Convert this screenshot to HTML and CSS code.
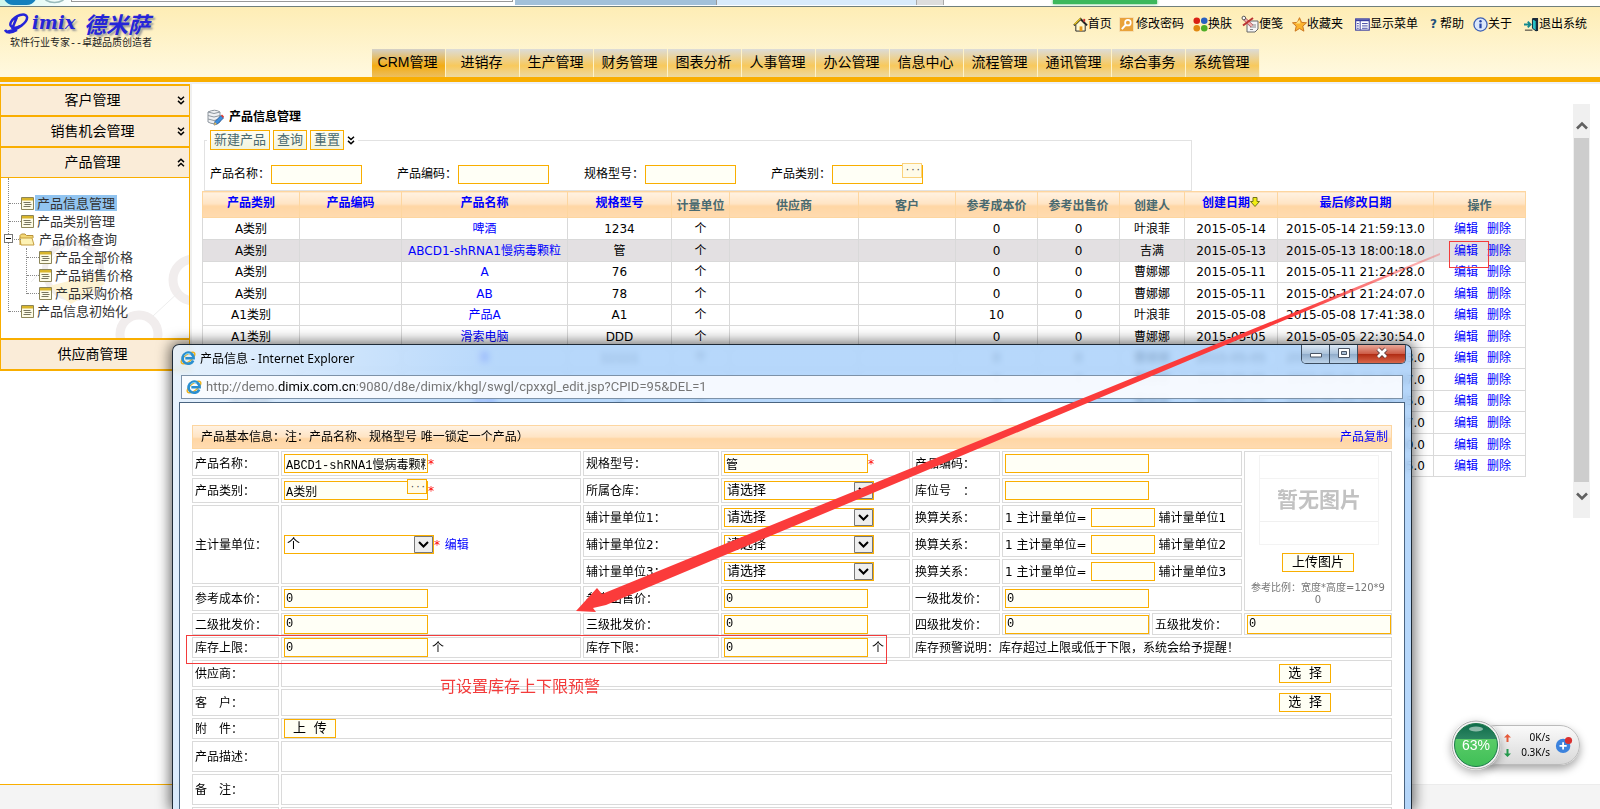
FILE: index.html
```html
<!DOCTYPE html>
<html lang="zh-CN">
<head>
<meta charset="utf-8">
<title>产品信息管理</title>
<link rel="stylesheet" href="styles.css">
</head>
<body>
<svg class="defs" aria-hidden="true">
  <defs>
    <symbol id="dbl" viewBox="0 0 8 9"><path d="M1 .7 4 3.5 7 .7M1 4.9 4 7.7 7 4.9" fill="none" stroke="#000" stroke-width="1.5"/></symbol>
    <symbol id="doc" viewBox="0 0 13 13"><path d="M.5 .5h12v12H.5z" fill="#fdfbe6" stroke="#8c8558"/><path d="M1 1h11v2.5H1z" fill="#d8b52c"/><path d="M2.500 5.500h7M3.500 7.500h7M2.500 9.500h7" stroke="#77755f"/></symbol>
    <symbol id="ie" viewBox="0 0 18 18"><ellipse cx="9" cy="9" rx="9.200" ry="4" transform="rotate(-38 9 9)" fill="none" stroke="#eeb21c" stroke-width="1.600"/><path d="M14.800 11.700A6.200 6.200 0 1 1 15.300 9.300H6" fill="none" stroke="#2a8fd0" stroke-width="3"/><path d="M5 6.500a5 5 0 0 1 7-1.800" stroke="#8fdcf8" stroke-width="1" fill="none"/></symbol>
    <linearGradient id="orb" x1="0" y1="0" x2="0" y2="1"><stop offset="0" stop-color="#0f6b4a"/><stop offset=".36" stop-color="#2c8662"/><stop offset=".37" stop-color="#59cc67"/><stop offset="1" stop-color="#3fbf57"/></linearGradient>
    <linearGradient id="trail" gradientUnits="userSpaceOnUse" x1="1440" y1="254" x2="1300" y2="312"><stop offset="0" stop-color="#fb3b3b" stop-opacity=".3"/><stop offset="1" stop-color="#fb3b3b"/></linearGradient>
  </defs>
</svg>

<div class="chrome-strip" aria-hidden="true">
  <svg class="chrome-back" viewBox="0 0 70 6"><path d="M4 0h31q-3 5-9 5H13Q7 5 4 0z" fill="#1480bd"/><path d="M45 0q9 5 18 0" fill="none" stroke="#9bb" stroke-width="1.500"/></svg>
  <span class="chrome-address"></span><span class="chrome-tab-a"></span><span class="chrome-tab-b"></span><span class="chrome-tab-c"></span><span class="chrome-green"></span>
</div>

<header class="header">
  <div class="brand">
    <div class="brand-name"><svg viewBox="0 0 28 24" class="brand-mark"><path d="M2 21C14 19 24 11 23 6 22 1 11 4 7 11c-3 6 5 7 9 4M13 6 8 18M1 19q3 5 12 0" fill="none" stroke="#2525d8" stroke-width="2.500"/></svg><b>imix</b><strong>德米萨</strong></div>
    <div class="brand-slogan">软件行业专家--卓越品质创造者</div>
  </div>
  <div class="header-side">
    <nav class="tools">
      <a href="#" class="t1"><svg viewBox="0 0 16 16"><path d="M3 8v7h10V8L8 3z" fill="#fff8cf" stroke="#222"/><path d="M1 9 8 2l7 7" fill="none" stroke="#222" stroke-width="2"/><path d="M1.500 8 8 1.500" stroke="#e8c51b" stroke-width="1.500"/><path d="M11 2h2v3h-2z" fill="#c33"/><path d="M7 10h3v5H7z" fill="#e89a1b"/></svg>首页</a>
      <a href="#" class="t2"><svg viewBox="0 0 16 16"><rect x=".5" y=".5" width="15" height="15" fill="#e9a23b" stroke="#f7dfb0"/><circle cx="9.500" cy="6" r="3" fill="none" stroke="#fff" stroke-width="1.800"/><path d="M7.500 8 3 13" stroke="#fff" stroke-width="2"/></svg>修改密码</a>
      <a href="#" class="t3"><svg viewBox="0 0 16 16"><circle cx="4" cy="4" r="3.500" fill="#d92114"/><circle cx="12" cy="4" r="3.500" fill="#2760c0"/><circle cx="4" cy="12" r="3.500" fill="#e08a12"/><circle cx="12" cy="12" r="3.500" fill="#4fae26"/></svg>换肤</a>
      <a href="#" class="t4"><svg class="wide" viewBox="0 0 18 18"><path d="M6 6h11v8l-3 3H6z" fill="#f5f5f5" stroke="#666"/><path d="M9 10h6M9 12h6M9 14.500h3" stroke="#888"/><path d="M3 3.500 11 11" stroke="#a55" stroke-width="3.500"/><path d="M3 3.500 11 11" stroke="#f3b4b4" stroke-width="2"/><path d="M2 10.500 12 3" stroke="#b33" stroke-width="2"/><circle cx="2.800" cy="3" r="1.800" fill="#fff" stroke="#555"/></svg>便笺</a>
      <a href="#" class="t5"><svg viewBox="0 0 16 16"><path d="m8 .7 2.200 5 5.300.500-4 3.500 1.200 5.400L8 12.300l-4.700 2.800 1.200-5.400-4-3.500 5.300-.5z" fill="#fbb32d" stroke="#c9731e"/><path d="m8 3 1 4-5 0z" fill="#ffe68a"/></svg>收藏夹</a>
      <a href="#" class="t6"><svg viewBox="0 0 16 16"><rect x=".7" y="2" width="14.500" height="12" fill="#fff" stroke="#3a3fa0" stroke-width="1.200"/><path d="M1 3.500h14" stroke="#3a3fa0" stroke-width="2"/><path d="M5.500 4v10M2 7h2M2 9.500h2M2 12h2M7.500 7h6M7.500 9.500h6M7.500 12h6" stroke="#3a3fa0"/></svg>显示菜单</a>
      <a href="#" class="t7"><b>?</b>帮助</a>
      <a href="#" class="t8"><svg viewBox="0 0 16 16"><circle cx="8" cy="8" r="7" fill="#dbe7fb" stroke="#3c5fb4" stroke-width="1.400"/><path d="M8 7v5" stroke="#2443a5" stroke-width="2.400"/><circle cx="8" cy="4.500" r="1.300" fill="#2443a5"/></svg>关于</a>
      <a href="#" class="t9"><svg viewBox="0 0 16 16"><path d="M9 1h6v14h-3" fill="#1b2a3a"/><path d="M9 2l4 2v11l-4-3z" fill="#27c3c9" stroke="#123"/><path d="M0 8h7M4 5l3 3-3 3" stroke="#12898f" stroke-width="2" fill="none"/><path d="M1 14h8" stroke="#222"/></svg>退出系统</a>
    </nav>
  </div>
  <nav class="tabs">
    <a href="#" class="on">CRM管理</a><a href="#">进销存</a><a href="#">生产管理</a><a href="#">财务管理</a><a href="#">图表分析</a><a href="#">人事管理</a><a href="#">办公管理</a><a href="#">信息中心</a><a href="#">流程管理</a><a href="#">通讯管理</a><a href="#">综合事务</a><a href="#">系统管理</a>
  </nav>
</header>

<div class="workspace">
  <aside class="sidebar">
    <button type="button" class="side-head"><span>客户管理</span><svg><use href="#dbl"/></svg></button>
    <button type="button" class="side-head"><span>销售机会管理</span><svg><use href="#dbl"/></svg></button>
    <button type="button" class="side-head"><span>产品管理</span><svg class="flip"><use href="#dbl"/></svg></button>
    <div class="side-panel">
      <svg class="watermark" viewBox="0 0 190 160" aria-hidden="true"><g fill="none" stroke="#f1eded" stroke-width="9"><circle cx="138" cy="156" r="19"/><circle cx="193" cy="102" r="21"/><circle cx="72" cy="92" r="28" stroke-width="6"/></g><path d="M152 138l28-26M30 104l34-36" stroke="#eee"/><path d="M48 108l48-12 8 10-34 20z" fill="#fdf3d3"/></svg>
      <ul class="tree">
        <li><a href="#" class="sel"><svg><use href="#doc"/></svg><span>产品信息管理</span></a></li>
        <li><a href="#"><svg><use href="#doc"/></svg><span>产品类别管理</span></a></li>
        <li class="branch"><a href="#"><i class="minus"></i><svg class="folder" viewBox="0 0 16 13"><path d="M1 12V2.500L2.500 1H6l1.500 1.500H14V5" fill="#f3d774" stroke="#b8923a"/><path d="M.8 5H13l2 7H2z" fill="#fdf2b4" stroke="#c49d3f"/></svg><span>产品价格查询</span></a>
          <ul>
            <li><a href="#"><svg><use href="#doc"/></svg><span>产品全部价格</span></a></li>
            <li><a href="#"><svg><use href="#doc"/></svg><span>产品销售价格</span></a></li>
            <li><a href="#"><svg><use href="#doc"/></svg><span>产品采购价格</span></a></li>
          </ul>
        </li>
        <li><a href="#"><svg><use href="#doc"/></svg><span>产品信息初始化</span></a></li>
      </ul>
    </div>
    <button type="button" class="side-head last"><span>供应商管理</span></button>
  </aside>

  <main class="main">
    <section class="content">
      <h1><svg viewBox="0 0 17 17"><path d="M1 3q7-3.500 12 0v10q-6 3.500-12 0z" fill="#eef0f3" stroke="#8f979f"/><path d="M1 3q6 3 12 0M1 6.500q6 3 12 0M1 10q6 3 12 0" fill="none" stroke="#8f979f"/><path d="M7 16l1-3.500 6-6 2.500 2.500-6 6z" fill="#3d8fe0" stroke="#234f8a" stroke-width=".8"/><path d="M14 6.500l1-1 2 2-1 1.500z" fill="#e23a2e"/><path d="M7 16l.8-3 2.200 2.200z" fill="#f3c057"/></svg>产品信息管理</h1>
      <form class="filter">
        <div class="filter-actions">
          <button type="button">新建产品</button><button type="button">查询</button><button type="button">重置</button><svg><use href="#dbl"/></svg>
        </div>
        <div class="filter-fields">
          <label>产品名称：<input type="text"></label>
          <label>产品编码：<input type="text"></label>
          <label>规格型号：<input type="text"></label>
          <label>产品类别：<span class="picker"><input type="text"><button type="button" aria-label="选择类别">···</button></span></label>
        </div>
      </form>
      <table class="grid">
        <colgroup><col class="g1"><col class="g2"><col class="g3"><col class="g4"><col class="g5"><col class="g6"><col class="g7"><col class="g8"><col class="g9"><col class="g10"><col class="g11"><col class="g12"><col class="g13"></colgroup>
        <thead><tr><th><a href="#">产品类别</a></th><th><a href="#">产品编码</a></th><th><a href="#">产品名称</a></th><th><a href="#">规格型号</a></th><th>计量单位</th><th>供应商</th><th>客户</th><th>参考成本价</th><th>参考出售价</th><th>创建人</th><th><a href="#">创建日期<svg viewBox="0 0 10 10"><path d="M3 .5h4v4h2.500L5 9.500.5 4.500H3z" fill="#f2ee12" stroke="#74741a"/></svg></a></th><th><a href="#">最后修改日期</a></th><th>操作</th></tr></thead>
        <tbody>
          <tr><td>A类别</td><td></td><td><a href="#">啤酒</a></td><td>1234</td><td>个</td><td></td><td></td><td>0</td><td>0</td><td>叶浪菲</td><td>2015-05-14</td><td>2015-05-14 21:59:13.0</td><td class="ops"><a href="#">编辑</a><a href="#">删除</a></td></tr>
          <tr class="hot"><td>A类别</td><td></td><td><a href="#">ABCD1-shRNA1慢病毒颗粒</a></td><td>管</td><td>个</td><td></td><td></td><td>0</td><td>0</td><td>吉满</td><td>2015-05-13</td><td>2015-05-13 18:00:18.0</td><td class="ops"><a href="#">编辑</a><a href="#">删除</a></td></tr>
          <tr class="low"><td>A类别</td><td></td><td><a href="#">A</a></td><td>76</td><td>个</td><td></td><td></td><td>0</td><td>0</td><td>曹娜娜</td><td>2015-05-11</td><td>2015-05-11 21:24:28.0</td><td class="ops"><a href="#">编辑</a><a href="#">删除</a></td></tr>
          <tr><td>A类别</td><td></td><td><a href="#">AB</a></td><td>78</td><td>个</td><td></td><td></td><td>0</td><td>0</td><td>曹娜娜</td><td>2015-05-11</td><td>2015-05-11 21:24:07.0</td><td class="ops"><a href="#">编辑</a><a href="#">删除</a></td></tr>
          <tr class="low"><td>A1类别</td><td></td><td><a href="#">产品A</a></td><td>A1</td><td>个</td><td></td><td></td><td>10</td><td>0</td><td>叶浪菲</td><td>2015-05-08</td><td>2015-05-08 17:41:38.0</td><td class="ops"><a href="#">编辑</a><a href="#">删除</a></td></tr>
          <tr><td>A1类别</td><td></td><td><a href="#">滑索电脑</a></td><td>DDD</td><td>个</td><td></td><td></td><td>0</td><td>0</td><td>曹娜娜</td><td>2015-05-05</td><td>2015-05-05 22:30:54.0</td><td class="ops"><a href="#">编辑</a><a href="#">删除</a></td></tr>
          <tr class="low"><td></td><td></td><td><a href="#">茶</a></td><td>11111</td><td>个</td><td></td><td></td><td>0</td><td>0</td><td>曹娜娜</td><td>2015-05-05</td><td>2015-05-05 22:28:13.0</td><td class="ops"><a href="#">编辑</a><a href="#">删除</a></td></tr>
          <tr><td></td><td></td><td></td><td></td><td></td><td></td><td></td><td>0</td><td>0</td><td>曹娜娜</td><td>2015-05-05</td><td>2015-05-05 22:25:07.0</td><td class="ops"><a href="#">编辑</a><a href="#">删除</a></td></tr>
          <tr class="low"><td>A1类别</td><td></td><td><a href="#">电脑</a></td><td>1</td><td>个</td><td></td><td></td><td>0</td><td>0</td><td>曹娜娜</td><td>2015-05-05</td><td>2015-05-05 22:20:15.0</td><td class="ops"><a href="#">编辑</a><a href="#">删除</a></td></tr>
          <tr><td></td><td></td><td></td><td></td><td></td><td></td><td></td><td></td><td></td><td></td><td></td><td>2015-05-05 22:18:07.0</td><td class="ops"><a href="#">编辑</a><a href="#">删除</a></td></tr>
          <tr><td></td><td></td><td></td><td></td><td></td><td></td><td></td><td></td><td></td><td></td><td></td><td>2015-05-05 22:16:30.0</td><td class="ops"><a href="#">编辑</a><a href="#">删除</a></td></tr>
          <tr class="low"><td></td><td></td><td></td><td></td><td></td><td></td><td></td><td></td><td></td><td></td><td></td><td>2015-05-05 22:14:25.0</td><td class="ops"><a href="#">编辑</a><a href="#">删除</a></td></tr>
        </tbody>
      </table>
    </section>
    <div class="scroll" aria-hidden="true">
      <svg viewBox="0 0 12 9"><path d="M1 7.500 6 2.500l5 5" fill="none" stroke="#606060" stroke-width="2.600"/></svg>
      <span></span>
      <svg class="flip" viewBox="0 0 12 9"><path d="M1 7.500 6 2.500l5 5" fill="none" stroke="#606060" stroke-width="2.600"/></svg>
    </div>
  </main>
</div>
<footer class="footer"><i></i></footer>

<section class="window">
  <div class="win-title"><svg><use href="#ie"/></svg><span>产品信息 - Internet Explorer</span>
    <div class="win-btns">
      <button type="button" aria-label="最小化"><svg viewBox="0 0 14 12"><path d="M1.500 6.500h11v3.500h-11z" fill="#fff" stroke="#4a5565"/></svg></button><button type="button" aria-label="最大化"><svg viewBox="0 0 14 12"><path d="M1.500 1.500h11v9h-11z" fill="#fff" stroke="#4a5565"/><path d="M4.500 4.500h5v3h-5z" fill="#a9bfd6" stroke="#4a5565"/></svg></button><button type="button" class="close" aria-label="关闭"><svg viewBox="0 0 14 12"><path d="M3 2l8 8M11 2l-8 8" stroke="#5a3a3a" stroke-width="4.500"/><path d="M3 2l8 8M11 2l-8 8" stroke="#fff" stroke-width="2.800"/></svg></button>
    </div>
  </div>
  <div class="win-url"><svg><use href="#ie"/></svg><span>http://demo.<b>dimix.com.cn</b>:9080/d8e/dimix/khgl/swgl/cpxxgl_edit.jsp?CPID=95&amp;DEL=1</span></div>
  <form class="win-body">
    <div class="band"><span>产品基本信息：注：产品名称、规格型号 唯一锁定一个产品）</span><a href="#">产品复制</a></div>
    <table class="edit">
      <colgroup><col class="e1"><col class="e2"><col class="e3"><col class="e4"><col class="e5"><col class="e6"><col class="e7"><col class="e8"></colgroup>
      <tr class="h25"><td><label for="f1">产品名称：</label></td><td><input id="f1" type="text" value="ABCD1-shRNA1慢病毒颗粒"><em>*</em></td><td><label for="f2">规格型号：</label></td><td><input id="f2" type="text" value="管"><em>*</em></td><td><label for="f3">产品编码：</label></td><td colspan="2"><input id="f3" type="text"></td>
        <td rowspan="6" class="photo"><div class="nopic"><b>暂无图片</b></div><button type="button">上传图片</button><p>参考比例：宽度*高度=120*90</p></td></tr>
      <tr class="h25"><td><label for="f4">产品类别：</label></td><td><span class="picker"><input id="f4" type="text" value="A类别"><button type="button" aria-label="选择类别">···</button></span><em>*</em></td><td><label for="f5">所属仓库：</label></td><td><select id="f5"><option>请选择</option></select></td><td><label for="f6">库位号　：</label></td><td colspan="2"><input id="f6" type="text"></td></tr>
      <tr class="h25"><td rowspan="3"><label for="f7">主计量单位：</label></td><td rowspan="3"><select id="f7"><option>个</option></select><em>*</em> <a href="#" class="unit-edit">编辑</a></td><td><label for="f8">辅计量单位1：</label></td><td><select id="f8"><option>请选择</option></select></td><td>换算关系：</td><td colspan="2"><label class="rate">1 主计量单位=<input type="text">辅计量单位1</label></td></tr>
      <tr class="h25"><td><label for="f9">辅计量单位2：</label></td><td><select id="f9"><option>请选择</option></select></td><td>换算关系：</td><td colspan="2"><label class="rate">1 主计量单位=<input type="text">辅计量单位2</label></td></tr>
      <tr class="h25"><td><label for="f10">辅计量单位3：</label></td><td><select id="f10"><option>请选择</option></select></td><td>换算关系：</td><td colspan="2"><label class="rate">1 主计量单位=<input type="text">辅计量单位3</label></td></tr>
      <tr class="h25"><td><label for="f11">参考成本价：</label></td><td><input id="f11" type="text" value="0"></td><td><label for="f12">参考出售价：</label></td><td><input id="f12" type="text" value="0"></td><td><label for="f13">一级批发价：</label></td><td colspan="2"><input id="f13" type="text" value="0"></td></tr>
      <tr class="h22"><td><label for="f14">二级批发价：</label></td><td><input id="f14" type="text" value="0"></td><td><label for="f15">三级批发价：</label></td><td><input id="f15" type="text" value="0"></td><td><label for="f16">四级批发价：</label></td><td><input id="f16" type="text" value="0"></td><td><label for="f17">五级批发价：</label></td><td><input id="f17" type="text" value="0"></td></tr>
      <tr class="h21"><td><label for="f18">库存上限：</label></td><td><input id="f18" type="text" value="0"><span class="unit">个</span></td><td><label for="f19">库存下限：</label></td><td><input id="f19" type="text" value="0"><span class="unit">个</span></td><td colspan="4">库存预警说明：库存超过上限或低于下限，系统会给予提醒！</td></tr>
      <tr class="h27"><td>供应商：</td><td colspan="7" class="pick"><button type="button">选 择</button></td></tr>
      <tr class="h27"><td>客　户：</td><td colspan="7" class="pick"><button type="button">选 择</button></td></tr>
      <tr class="h21"><td>附　件：</td><td colspan="7"><button type="button">上 传</button></td></tr>
      <tr class="h31"><td>产品描述：</td><td colspan="7"></td></tr>
      <tr class="h31"><td>备　注：</td><td colspan="7"></td></tr>
      <tr class="h31"><td></td><td colspan="7"></td></tr>
    </table>
  </form>
</section>

<svg class="marks" aria-hidden="true">
  <path d="M1440 253 602 594 597 588 576 611 596 612 593 608 606 605 1440 255Z" fill="url(#trail)"/>
  <g fill="none" stroke="#f33b3b"><rect x="1449.500" y="241.500" width="39" height="26"/><rect x="186.500" y="635.500" width="700" height="28"/></g>
</svg>
<p class="mark-note">可设置库存上下限预警</p>

<div class="speed">
  <div class="orb"><svg viewBox="0 0 50 50"><circle cx="25" cy="25" r="24" fill="#f3f3f3" stroke="#a9a9a9"/><circle cx="25" cy="25" r="21.500" fill="url(#orb)" stroke="#1d7a4b"/><ellipse cx="25" cy="9" rx="7" ry="2.500" fill="#fff" opacity=".5"/></svg><b>63%</b></div>
  <div class="rates">
    <div><svg viewBox="0 0 7 8"><path d="M3.500 0 7 3.500H4.500V8h-2V3.500H0z" fill="#e65c3c"/></svg><span>0K/s</span></div>
    <div><svg viewBox="0 0 7 8"><path d="M3.500 8 0 4.500h2.500V0h2v4.500H7z" fill="#249a4d"/></svg><span>0.3K/s</span></div>
  </div>
  <svg class="plus" viewBox="0 0 20 20"><circle cx="9" cy="11" r="8" fill="#3b82dd"/><path d="M9 7v8M5 11h8" stroke="#fff" stroke-width="2"/><circle cx="15" cy="5" r="4" fill="#d92f2f"/></svg>
</div>
</body>
</html>
```
FILE: styles.css
```css
* { box-sizing: border-box; }
html, body { height: 100%; }
body {
  margin: 0;
  position: relative;
  display: flex;
  flex-direction: column;
  overflow: hidden;
  background: #fff;
  color: #000;
  font: 12px/16px "DejaVu Sans", "Noto Sans CJK SC", sans-serif;
}
a { color: #00f; text-decoration: none; }
button, input, select { font: 13px/15px "Liberation Mono", "Noto Sans CJK SC", monospace; color: #000; margin: 0; border-radius: 0; }
.defs { position: absolute; width: 0; height: 0; }
.flip { transform: rotate(180deg); }

/* browser strip */
.chrome-strip { flex: none; display: flex; height: 7px; background: linear-gradient(90deg, #cff7ec, #fff 80px); border-bottom: 1px solid #6f7f7c; }
.chrome-back { width: 71px; height: 6px; }
.chrome-address { width: 442px; height: 2px; margin-right: 2px; border: 1px solid #999; border-top: 0; background: #fff; }
.chrome-tab-a { width: 201px; height: 5px; background: #a3c1da; }
.chrome-tab-b { width: 200px; height: 5px; background: #d9ebfb; border-left: 1px solid #999; }
.chrome-tab-c { width: 28px; height: 5px; background: #ddd; border: 1px solid #aaa; border-width: 0 1px; }
.chrome-green { width: 104px; height: 4px; margin-left: 109px; background: #3cb85c; box-shadow: 0 0 3px #3cb85c; }

/* header */
.header {
  flex: none;
  display: grid;
  grid-template-columns: 372px 1fr;
  grid-template-rows: 42px 28px;
  border-bottom: 5px solid #f9ae00;
  background: linear-gradient(#feedb5, #fff9e0);
}
.brand { grid-row: 1 / 3; padding: 2px 0 0 4px; }
.brand-name { display: flex; align-items: center; height: 28px; color: #2525d8; text-shadow: 2px 2px 2px #999; }
.brand-mark { width: 28px; height: 24px; }
.brand-name b { font: italic bold 18px/24px "DejaVu Serif", serif; width: 52px; }
.brand-name strong { font: italic bold 22px/26px "Noto Sans CJK SC", sans-serif; }
.brand-slogan { padding-left: 6px; font: 10px/14px "Liberation Mono", "Noto Sans CJK SC", sans-serif; color: #222; }
.header-side { display: flex; justify-content: flex-end; padding: 9px 13px 0 0; }
.tools { display: flex; gap: 7px; height: 16px; }
.tools a { display: flex; align-items: center; color: #000; white-space: nowrap; }
.tools svg { width: 15px; height: 15px; }
.tools .wide { width: 18px; height: 18px; }
.tools .t2 svg { margin-right: 2px; }
.tools .t3, .tools .t4, .tools .t5, .tools .t8 { margin-left: 2px; }
.tools .t6, .tools .t9 { margin-left: 5px; }
.tools .t7 { margin-left: 5px; }
.tools b { width: 10px; color: #23507a; }
.tabs { display: flex; }
.tabs a {
  width: 74px;
  padding-right: 2px;
  border-right: 1px solid #fff3c8;
  background: linear-gradient(#dcdcd8, #f8c95c 60%, #ecd9a4);
  color: #000;
  font: 14px/27px "Liberation Sans", "Noto Sans CJK SC", sans-serif;
  text-align: center;
}
.tabs .on { background: linear-gradient(#d3d0c8, #f4ac12 60%, #ecbf60); }

/* sidebar */
.workspace { flex: 1; display: flex; min-height: 0; border-top: 2px solid #eef1f7; }
.sidebar { flex: none; width: 192px; border-right: 2px solid #f0f0f0; }
.side-head {
  display: flex;
  align-items: center;
  width: 190px;
  height: 31px;
  padding: 0 5px 0 0;
  border: 1px solid #f9ae00;
  border-width: 2px 1px 0;
  background: #faecd8;
}
.side-head span { flex: 1; padding: 0 0 3px 7px; font: 14px/20px "Noto Sans CJK SC", sans-serif; text-align: center; }
.side-head svg { width: 8px; height: 9px; margin-right: -1px; }
.side-head.last { height: 33px; padding-right: 12px; border-bottom-width: 2px; }
.side-panel { position: relative; height: 161px; width: 190px; padding-top: 16px; border: 1px solid #f9ae00; border-bottom: 0; overflow: hidden; }
.watermark { position: absolute; left: 0; top: 0; width: 190px; height: 160px; }
.tree, .tree ul { position: relative; margin: 0; padding: 0; list-style: none; }
.tree::before, .tree ul::before { content: ""; position: absolute; left: 7px; top: -16px; bottom: 8px; border-left: 1px dotted #888; }
.tree ul { margin-left: 18px; }
.tree ul::before { top: 0; }
.tree a { position: relative; display: flex; align-items: center; height: 18px; padding-left: 20px; color: #333; }
.tree a::before { content: ""; position: absolute; left: 8px; top: 9px; width: 12px; border-top: 1px dotted #888; }
.tree a svg { width: 13px; height: 13px; margin-right: 1px; }
.tree a .folder { width: 16px; height: 13px; margin: 0 2px 0 -2px; }
.tree a span { padding: 0 2px; font: 13px/16px "Noto Sans CJK SC", sans-serif; }
.tree .sel span { background: #91c4f0; }
.minus { position: absolute; left: 3px; top: 4px; width: 9px; height: 9px; border: 1px solid #777; background: linear-gradient(#000, #000) center / 5px 1px no-repeat #fff; z-index: 1; }

/* main */
.main { flex: 1; display: flex; min-width: 0; }
.content { flex: 1; min-width: 0; padding: 24px 47px 0 10px; }
h1 { display: flex; align-items: center; gap: 5px; margin: 0; padding-left: 5px; height: 18px; font-size: 12px; line-height: 16px; }
h1 svg { width: 17px; height: 17px; }
.filter { position: relative; height: 65px; margin: 0 334px 0 2px; margin-right: 316px; }
.filter::before { content: ""; position: absolute; inset: 14px 0 0; border: 1px solid #e2e2e2; }
.filter-actions { position: relative; display: inline-flex; align-items: center; margin-left: 3px; padding: 4px 3px 0; background: #fff; }
.filter-actions button { height: 20px; padding: 0 3px; margin-right: 3px; border: 1px solid #f9ae00; background: linear-gradient(#fffef4, #f1f4df); color: #4a6a70; line-height: 17px; }
.filter-actions svg { width: 8px; height: 9px; }
.filter-fields { position: relative; display: flex; padding: 14px 0 0 6px; }
.filter-fields label { display: flex; align-items: center; width: 187px; white-space: nowrap; height: 20px; line-height: 20px; }
.filter-fields input { width: 91px; height: 19px; margin-left: 1px; }
input { height: 19px; padding: 0 1px; border: 1px solid #f9ae00; background: #fffff6; outline: 0; }
.picker { position: relative; display: inline-flex; }
.picker button { position: absolute; right: 1px; top: -2px; width: 20px; height: 15px; padding: 0; border: 1px solid #fad27c; background: #fffbe8; color: #444; line-height: 10px; font-size: 9px; text-align: right; }
.grid { width: 100%; table-layout: fixed; border-collapse: collapse; }
.grid th, .grid td { height: 22px; padding: 0; border: 1px solid #d9d9d9; text-align: center; white-space: nowrap; overflow: hidden; line-height: 16px; }
.grid .low td { height: 21px; }
.grid th { height: 26px; padding-top: 2px; border-color: #fdd6a0; background: linear-gradient(#fff2e2, #ffe4c4 45%, #ffd6a4 55%, #ffdbb0); color: #4a6a70; }
.grid th a { display: block; padding-bottom: 6px; }
.grid th svg { width: 10px; height: 10px; }
.grid .hot { background: #e3e0e2; }
.grid .ops { padding-left: 6px; }
.ops a + a { margin-left: 9px; }
.g1 { width: 97px; } .g2 { width: 102px; } .g3 { width: 166px; } .g4 { width: 104px; } .g5 { width: 58px; }
.g6 { width: 129px; } .g7 { width: 97px; } .g8 { width: 82px; } .g9 { width: 82px; } .g10 { width: 65px; }
.g11 { width: 93px; } .g12 { width: 156px; } .g13 { width: 92px; }
.scroll { flex: none; display: flex; flex-direction: column; align-items: center; width: 17px; height: 414px; margin: 20px 10px 0 18px; padding: 17px 0; background: #f0f0f0; }
.scroll svg { width: 12px; height: 9px; }
.scroll span { flex: 1; width: 15px; margin: 8px 0 10px; background: #cdcdcd; }
.footer { flex: none; height: 25px; background: #f4f4f4; border-top: 1px solid #ececec; }
.footer i { display: block; width: 192px; margin-top: -1px; border-top: 1px solid #f9ae00; }

/* popup window */
.window {
  position: absolute;
  left: 172px;
  right: 188px;
  top: 344px;
  bottom: 0;
  display: flex;
  flex-direction: column;
  padding: 0 6px;
  overflow: hidden;
  border: 1px solid #1e2a36;
  border-bottom: 0;
  border-radius: 7px 7px 0 0;
  background: linear-gradient(100deg, rgba(225, 239, 253, .8), rgba(165, 206, 250, .8) 25%, rgba(165, 206, 250, .8));
  -webkit-backdrop-filter: blur(3px);
  backdrop-filter: blur(3px);
  box-shadow: 0 0 14px 2px rgba(0, 0, 0, .6);
}
.win-title { flex: none; display: flex; height: 30px; padding: 5px 0 0 1px; gap: 4px; font: 12px/18px "Noto Sans", "Noto Sans CJK SC", sans-serif; }
.win-title > svg, .win-url svg { width: 16px; height: 16px; overflow: visible; }
.win-title > span { flex: 1; }
.win-btns { display: flex; height: 19px; margin: -5px -1px 0 0; border: 1px solid #3d4e61; border-top: 0; border-radius: 0 0 5px 5px; overflow: hidden; }
.win-btns button { width: 28px; height: 18px; padding: 0; border: 0; border-right: 1px solid #3d4e61; background: linear-gradient(#dde9f5, #a9c1da 50%, #8fabc9 50%, #bcd3ea); line-height: 12px; }
.win-btns svg { width: 14px; height: 12px; }
.win-btns .close { width: 47px; border-right: 0; background: linear-gradient(#e8a798, #cc5a45 50%, #b02a12 50%, #d8664a); }
.win-url { flex: none; display: flex; align-items: center; gap: 4px; height: 24px; margin: 0 2px 3px; padding-left: 4px; border: 1px solid #7d92a8; background: rgba(252, 253, 255, .9); color: #767676; font: 13px/18px Roboto, sans-serif; }
.win-url b { color: #000; font-weight: normal; }
.win-body { flex: 1; min-height: 0; padding: 22px 10px 0; border: 1px solid #4a6480; border-bottom: 0; background: #fff; overflow: hidden; }
.band { display: flex; justify-content: space-between; align-items: center; height: 24px; margin: 0 2px; padding: 0 3px 0 8px; border: 1px solid #fdd6a0; background: linear-gradient(#fff2e2, #ffe4c4 50%, #ffd6a4 58%, #ffdbb0); }
.edit { width: 100%; table-layout: fixed; border-spacing: 2px; border-collapse: separate; }
.edit td { padding: 0 0 0 2px; border: 1px solid #dadada; vertical-align: middle; white-space: nowrap; line-height: 16px; }
.edit td > * { vertical-align: middle; }
.e1 { width: 87px; } .e2 { width: 300px; } .e3 { width: 136px; } .e4 { width: 189px; } .e5 { width: 88px; } .e6 { width: 148px; } .e7 { width: 90px; } .e8 { width: 148px; }
.h25 { height: 25px; } .h22 { height: 22px; } .h21 { height: 21px; } .h27 { height: 27px; } .h31 { height: 31px; }
.edit input { display: inline-block; width: 144px; font-size: 12px; }
.edit em { color: #f00; font-style: normal; }
.edit select {
  width: 150px;
  height: 19px;
  padding: 0 22px 0 2px;
  appearance: none;
  border: 1px solid #f9ae00;
  background: #fff url("data:image/svg+xml,%3Csvg xmlns='http://www.w3.org/2000/svg' width='19' height='17'%3E%3Cpath d='M.5.5h18v16H.5z' fill='%23eee' stroke='%23777'/%3E%3Cpath d='M5 6l4.500 4.500L14 6' fill='none' stroke='%23000' stroke-width='2'/%3E%3C/svg%3E") right center no-repeat;
}
.unit-edit { margin-left: 1px; }
.unit { margin-left: 4px; }
.edit .rate { display: flex; align-items: center; }
.edit .rate input { width: 64px; margin: 0 4px; }
.edit button { height: 19px; padding: 0 8px; border: 1px solid #f9ae00; background: #fffff4; vertical-align: middle; line-height: 15px; }
.edit .picker button { height: 15px; padding: 0; background: #fffbe8; line-height: 10px; }
.edit .pick { padding-right: 60px; text-align: right; }
.edit .photo { padding: 3px 4px 0; vertical-align: top; text-align: center; white-space: normal; }
.edit .photo button { padding: 0 9px; }
.nopic { display: flex; align-items: center; justify-content: center; height: 90px; margin: 0 8px 8px 10px; border: 1px solid #f3f3f3; background: linear-gradient(#f3f3f3, #f3f3f3) 0 22px / 100% 1px no-repeat, linear-gradient(#f0f0f0, #f0f0f0) 0 65px / 100% 1px no-repeat; color: #c2c2c2; font-size: 21px; }
.photo p { margin: 10px 0 0; color: #777; font-size: 10px; line-height: 12px; word-break: break-all; }

/* annotations */
.marks { position: absolute; left: 0; top: 0; width: 100%; height: 100%; pointer-events: none; }
.mark-note { position: absolute; left: 440px; top: 675px; margin: 0; color: #f33b3b; font: 16px/20px "Noto Sans CJK SC", sans-serif; }

/* network speed widget */
.speed { position: absolute; right: 20px; top: 725px; display: flex; align-items: center; width: 104px; height: 40px; padding-right: 6px; border: 1px solid #bbb; border-radius: 20px; background: linear-gradient(#fafafa, #d9d9d9); box-shadow: 0 4px 8px rgba(0, 0, 0, .35); }
.orb { position: relative; flex: none; width: 50px; height: 50px; margin-left: -26px; display: grid; place-items: center; border-radius: 50%; box-shadow: 0 3px 8px rgba(0, 0, 0, .3); }
.orb svg { position: absolute; width: 50px; height: 50px; }
.orb b { position: relative; color: #fff; font: 14px/18px "Liberation Sans", sans-serif; }
.rates { flex: 1; padding: 0 5px 0 3px; font: 10px/15px "Noto Sans", sans-serif; }
.rates div { display: flex; align-items: center; justify-content: space-between; }
.rates svg { width: 7px; height: 8px; }
.plus { width: 18px; height: 18px; flex: none; }
```
